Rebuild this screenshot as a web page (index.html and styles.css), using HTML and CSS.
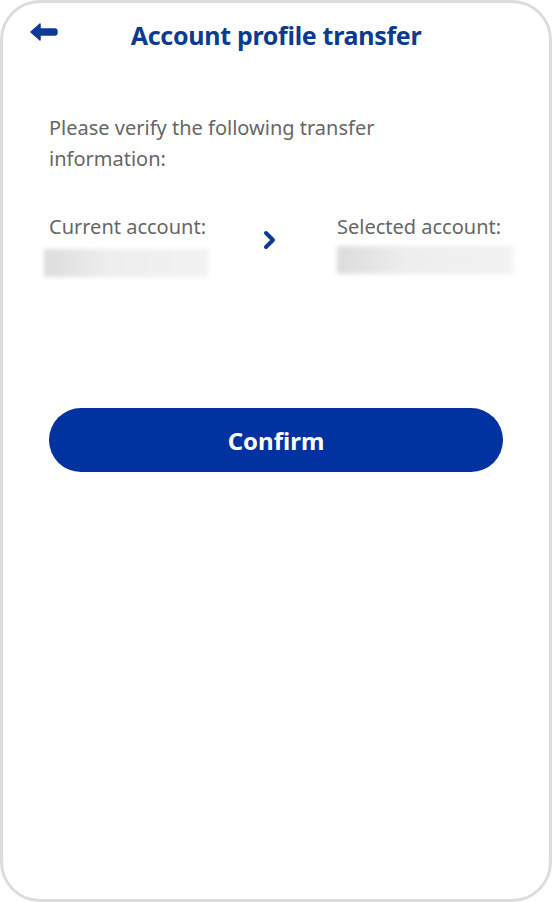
FILE: index.html
```html
<html>
	<head>
		<link rel="stylesheet" href="styles.css">
	</head>
	<body>
		<div class="frame">
			<div class="bar">
				<button class="back">
					<svg width="28" height="18" viewBox="0 0 28 18"><path d="M1 9 L10 1 L10 6 L25 6 Q27 6 27 9 Q27 12 25 12 L10 12 L10 17 Z" fill="#0b3b96" stroke="#0b3b96" stroke-width="1.5" stroke-linejoin="round"/></svg>
				</button>
				<h1>Account profile transfer</h1>
			</div>
			<p class="intro">Please verify the following transfer information:</p>
			<div class="accounts">
				<div class="acct cur">
					<span>Current account:</span>
					<div class="blur wide"></div>
				</div>
				<svg class="chev" width="14" height="20" viewBox="0 0 14 20"><path d="M3 3 L10 10 L3 17" fill="none" stroke="#0b3b96" stroke-width="4" stroke-linecap="round" stroke-linejoin="round"/></svg>
				<div class="acct sel">
					<span>Selected account:</span>
					<div class="blur"></div>
				</div>
			</div>
			<button class="confirm">Confirm</button>
		</div>
	</body>
</html>
```
FILE: styles.css
```css
body {
	margin: 0;
	background: #fff;
	font-family: "Noto Sans", "Open Sans", sans-serif;
}
.frame {
	box-sizing: border-box;
	width: 552px;
	height: 902px;
	border: 3px solid #dcdcdc;
	border-radius: 40px;
	padding: 0 46px;
}
.bar {
	position: relative;
	height: 66px;
	display: flex;
	align-items: center;
	justify-content: center;
}
.back {
	position: absolute;
	left: -19px;
	top: 20px;
	border: none;
	background: none;
	padding: 0;
}
h1 {
	margin: 0;
	margin-top: -2px;
	font-size: 25px;
	font-weight: bold;
	color: #0b3b8f;
	letter-spacing: -0.3px;
}
.intro {
	margin: 43px 0 0;
	width: 360px;
	font-size: 20px;
	line-height: 31px;
	color: #666;
}
.accounts {
	display: flex;
	align-items: flex-start;
	margin-top: 38px;
}
.acct {
	display: flex;
	flex-direction: column;
	font-size: 20px;
	color: #666;
	white-space: nowrap;
}
.acct span { line-height: 30px; }
.cur { width: 214px; flex-shrink: 0; }
.chev {
	flex-shrink: 0;
	margin-top: 18px;
}
.sel {
	margin-left: 60px;
}
.blur {
	margin-top: 4px;
	width: 176px;
	height: 28px;
	background: linear-gradient(90deg, #dcdcdc, #eeeeee 40%, #f2f2f2);
	filter: blur(2px);
}
.wide {
	margin-left: -5px;
	margin-top: 7px;
	width: 164px;
}
.confirm {
	display: block;
	margin-top: 131px;
	width: 454px;
	height: 64px;
	border: none;
	border-radius: 32px;
	background: #0033a0;
	color: #fff;
	font-family: inherit;
	font-size: 24px;
	font-weight: bold;
}
```
